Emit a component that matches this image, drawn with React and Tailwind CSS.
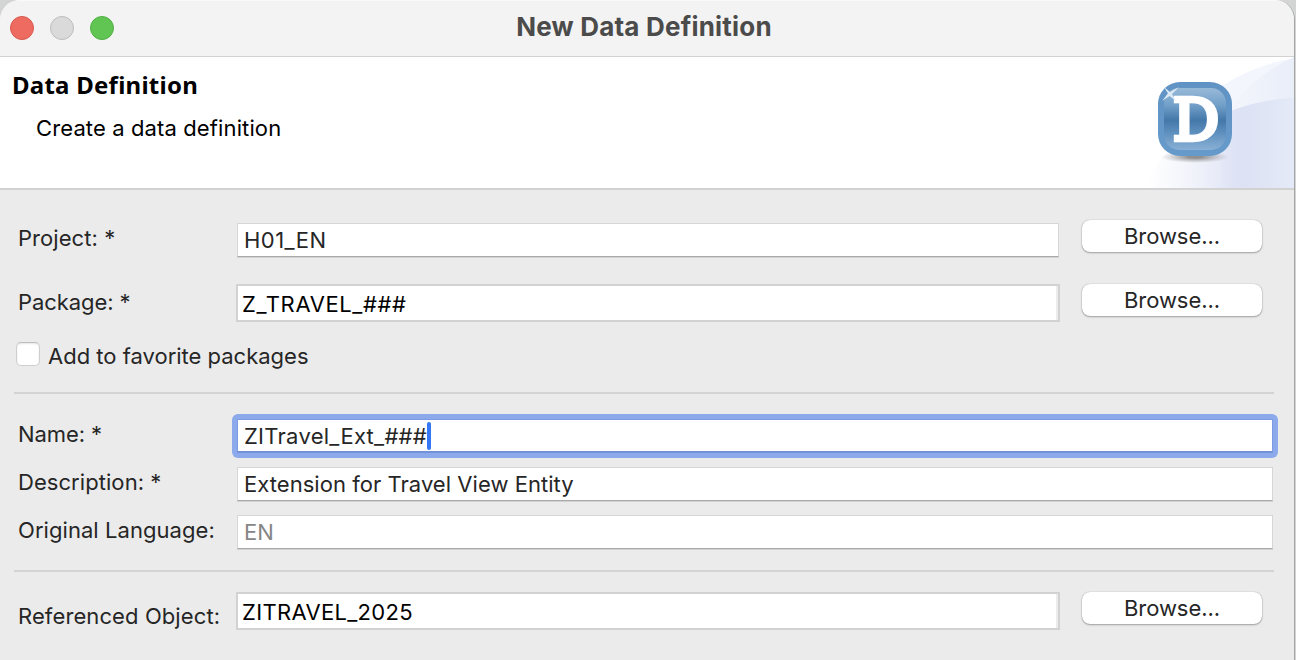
const labelText = 'whitespace-nowrap text-[22px] leading-6 text-[#262626]';

function Label({ className, children }) {
  return <label className={`w-[218px] shrink-0 tracking-[0.06px] ${labelText} ${className}`}>{children}</label>;
}

function NativeField({ className, children }) {
  return (
    <div className={`ml-px h-[34px] border border-[#d6d6d6] border-b-[#a9a9a9] bg-white pl-1.5 pt-1 shadow-[0_1px_0_#d2d2d2] ${labelText} ${className}`}>
      {children}
    </div>
  );
}

function StyledField({ className, children }) {
  return (
    <div className={`h-[38px] w-[824px] shrink-0 border-2 border-[#d2d2d2] bg-white pl-1 pt-1.5 text-[22px] leading-6 whitespace-nowrap text-black shadow-[inset_-2px_0_0_#ececec] ${className}`}>
      {children}
    </div>
  );
}

function BrowseButton() {
  return (
    <button className="ml-auto mr-8 mt-px h-8 w-[180px] shrink-0 rounded-[8px] bg-white text-[22px] leading-[33px] tracking-[-0.05px] text-[#262626] shadow-[0_0_1px_rgba(0,0,0,0.35),0_1px_2px_rgba(0,0,0,0.3)]">
      Browse...
    </button>
  );
}

function Banner() {
  return (
    <svg className="h-[131px] w-[166px] shrink-0" viewBox="1128 57 166 131">
      <defs>
        <linearGradient id="swoosh" x1="0" x2="1">
          <stop offset="0" stopColor="#e8ebf8" stopOpacity="0" />
          <stop offset="0.65" stopColor="#dce1f4" />
          <stop offset="1" stopColor="#e5eaf8" />
        </linearGradient>
        <linearGradient id="upper" x1="0" x2="1">
          <stop offset="0" stopColor="#f2f5fb" />
          <stop offset="1" stopColor="#e9eef9" />
        </linearGradient>
        <linearGradient id="rim" x1="0" y1="0" x2="0" y2="1">
          <stop offset="0" stopColor="#6093c4" />
          <stop offset="1" stopColor="#669acb" />
        </linearGradient>
        <linearGradient id="face" x1="0" y1="0" x2="0" y2="1">
          <stop offset="0" stopColor="#98b9d8" />
          <stop offset="0.28" stopColor="#719fc8" />
          <stop offset="0.52" stopColor="#4478aa" />
          <stop offset="0.7" stopColor="#5b8dbc" />
          <stop offset="1" stopColor="#89b0d5" />
        </linearGradient>
        <radialGradient id="shade">
          <stop offset="0.2" stopColor="#777" stopOpacity="0.8" />
          <stop offset="1" stopColor="#999" stopOpacity="0" />
        </radialGradient>
      </defs>
      <path d="M1222 86Q1252 66 1294 58V188H1222Z" fill="#f3f6fc" />
      <path d="M1234 105Q1256 74 1294 57V188H1234Z" fill="url(#upper)" />
      <path d="M1146 188C1158 145 1220 101 1294 98V188Z" fill="url(#swoosh)" />
      <ellipse cx="1195" cy="157" rx="34" ry="6" fill="url(#shade)" />
      <rect x="1158" y="82" width="74" height="74" rx="22" fill="url(#rim)" />
      <rect x="1164" y="88" width="62" height="62" rx="15" fill="url(#face)" />
      <text x="1173" y="139.700" textLength="46" lengthAdjust="spacingAndGlyphs" fill="white" stroke="white" strokeWidth="4.600" fontSize="57" fontFamily="DejaVu Serif, serif">D</text>
      <path d="M1164 87L1170 92L1179 87L1172 94L1176 101L1169.500 96L1162 101L1168 93.500Z" fill="#dce9f5" />
    </svg>
  );
}

export default function App() {
  return (
    <div className="h-[660px] w-[1296px] overflow-hidden bg-[#d3d5d4] font-['Inter','Liberation_Sans',sans-serif]">
      <div className="flex h-[660px] w-[1295px] flex-col overflow-hidden rounded-t-[20px] border-r border-[#a5a5a5] bg-[#ebebeb]">
        <div className="grid h-[57px] shrink-0 grid-cols-[1fr_auto_1fr] items-center border-b border-[#d2d2d2] border-t border-t-[#f9f9f9] bg-[#f3f3f3]">
          <div className="flex gap-4 pb-0.5 pl-2.5">
            <span className="size-6 rounded-full border border-[#d8584c] bg-[#ed6b60]" />
            <span className="size-6 rounded-full border border-[#bcbcbc] bg-[#dadada]" />
            <span className="size-6 rounded-full border border-[#51ae43] bg-[#61c554]" />
          </div>
          <h1 className="pb-1 pr-1.5 text-[26px] leading-8 font-bold tracking-[0.2px] text-[#4b4b4b]">New Data Definition</h1>
        </div>

        <div className="flex h-[133px] shrink-0 justify-between border-b-2 border-[#d2d2d2] bg-white text-black">
          <div>
            <h2 className="pl-3 pt-3 font-['Noto_Sans',sans-serif] text-[24px] leading-8 font-bold tracking-[0.25px]">Data Definition</h2>
            <p className="pl-9 pt-[15px] text-[22px] leading-6 tracking-[0.12px]">Create a data definition</p>
          </div>
          <Banner />
        </div>

        <div className="mt-[29px] flex h-16 shrink-0 items-start pl-[18px]">
          <Label className="pt-[7px]">Project: *</Label>
          <NativeField className="mt-1 w-[822px]"><span className="tracking-[0.45px]">H01_EN</span></NativeField>
          <BrowseButton />
        </div>
        <div className="flex h-[59px] shrink-0 items-start pl-[18px]">
          <Label className="pt-[7px]"><span className="tracking-[-0.08px]">Package: *</span></Label>
          <StyledField className="mt-px tracking-[0.6px]">Z_TRAVEL_###</StyledField>
          <BrowseButton />
        </div>
        <div className="flex h-[50px] shrink-0 items-start gap-2 pl-4">
          <span className="size-6 shrink-0 rounded-[5px] border border-[#cfcfcf] border-t-[#bdbdbd] bg-white shadow-[inset_0_1px_2px_rgba(0,0,0,0.1)]" />
          <span className={`pt-0.5 ${labelText}`}>Add to favorite packages</span>
        </div>
        <div className="ml-3.5 h-0.5 w-[1260px] shrink-0 bg-[#d3d3d3]" />

        <div className="flex h-[73px] shrink-0 items-start pl-[18px] pt-5">
          <Label className="-mr-1 pt-2"><span className="tracking-[-0.08px]">Name: *</span></Label>
          <div className="h-11 w-[1046px] shrink-0 rounded-[6px] bg-[#8ca9ec] p-[5px] pb-1">
            <div className={`flex h-[34px] border border-b-2 border-[#7c9be4] border-b-[#7391d6] bg-white pl-1.5 pt-px ${labelText}`}>
              <span className="pt-[3px] tracking-[0.28px]">ZITravel_Ext_###</span>
              <span className="mt-px h-7 w-1 rounded-full bg-[#3478f6]" />
            </div>
          </div>
        </div>
        <div className="flex h-12 shrink-0 items-start pl-[18px]">
          <Label className="pt-[3px]">Description: *</Label>
          <NativeField className="w-[1036px]"><span className="tracking-[0.04px]">Extension for Travel View Entity</span></NativeField>
        </div>
        <div className="flex h-[55px] shrink-0 items-start pl-[18px]">
          <Label className="pt-[3px]">Original Language:</Label>
          <NativeField className="w-[1036px]"><span className="text-[#858585]">EN</span></NativeField>
        </div>
        <div className="ml-3.5 h-0.5 w-[1260px] shrink-0 bg-[#d3d3d3]" />

        <div className="mt-[19px] flex shrink-0 items-start pl-[18px]">
          <Label className="pt-[13px]"><span className="tracking-[0.1px]">Referenced Object:</span></Label>
          <StyledField className="mt-px tracking-[0.32px]">ZITRAVEL_2025</StyledField>
          <BrowseButton />
        </div>
      </div>
    </div>
  );
}
